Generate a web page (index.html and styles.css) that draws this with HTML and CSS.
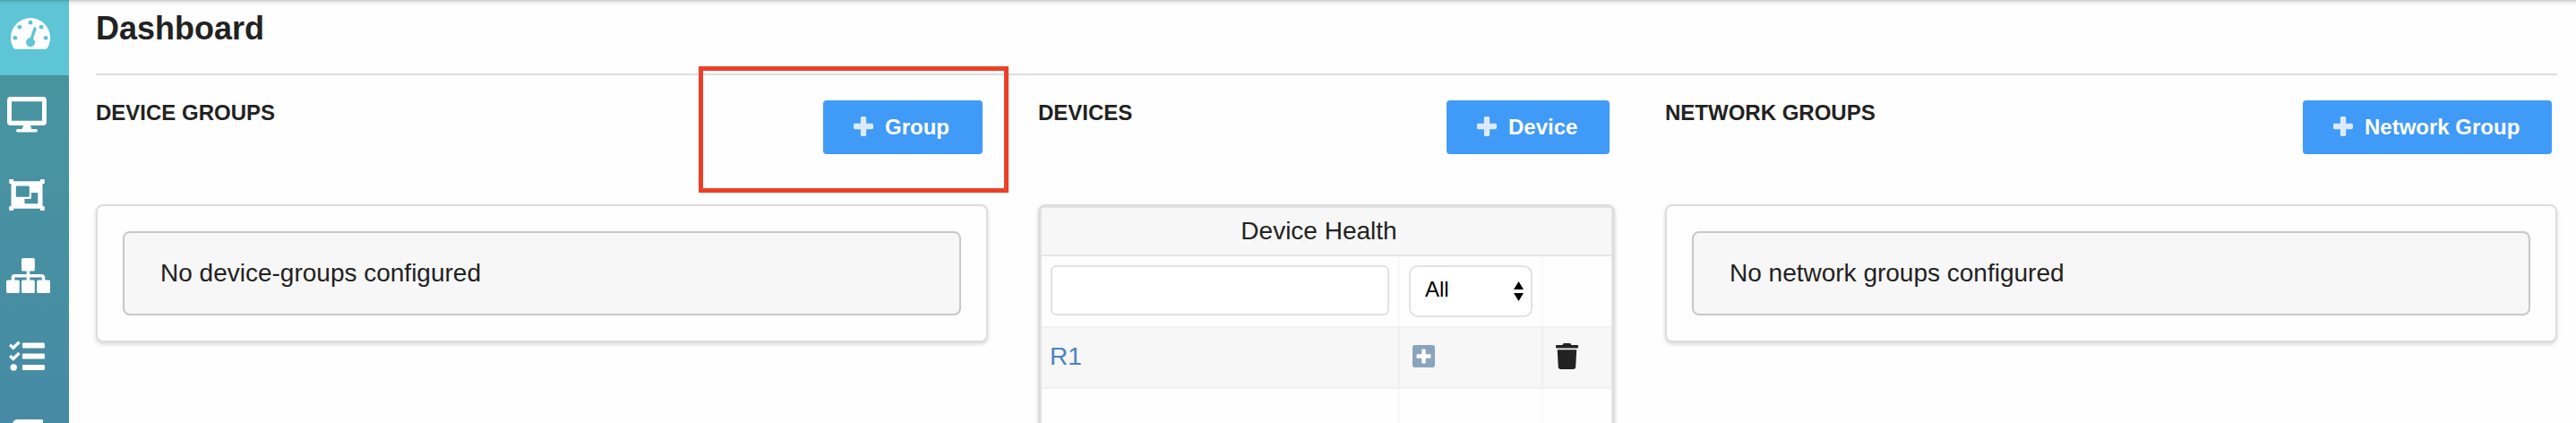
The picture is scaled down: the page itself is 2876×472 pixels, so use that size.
FILE: index.html
```html
<!DOCTYPE html>
<html lang="en">
<head>
<meta charset="utf-8">
<title>Dashboard</title>
<link rel="stylesheet" href="styles.css">
</head>
<body>
<svg class="defs" width="0" height="0">
  <symbol id="plus" viewBox="0 32 448 448"><path d="M416 192H288V64c0-17.67-14.33-32-32-32h-64c-17.67 0-32 14.33-32 32v128H32c-17.67 0-32 14.33-32 32v64c0 17.67 14.33 32 32 32h128v128c0 17.67 14.33 32 32 32h64c17.67 0 32-14.33 32-32V320h128c17.67 0 32-14.33 32-32v-64c0-17.67-14.33-32-32-32z"/></symbol>
</svg>
<div class="app">
  <nav class="sidebar">
    <a class="nav-item active">
      <svg class="ic-tach" viewBox="0 0 44 35"><path fill="#fff" d="M22 0a22 22 0 0 0-22 22c0 4 1 8 3 11.300q.900 1.500 2.500 1.500h33q1.600 0 2.500-1.500c2-3.300 3-7.300 3-11.300A22 22 0 0 0 22 0z"/><g class="hole"><circle cx="22" cy="5.200" r="2.400"/><circle cx="9.900" cy="10.200" r="2.400"/><circle cx="34.100" cy="10.200" r="2.400"/><circle cx="4.900" cy="22.300" r="2.400"/><circle cx="39.100" cy="22.300" r="2.400"/><circle cx="22" cy="27.300" r="5"/></g><path class="needle" d="M22.700 25L26.900 12.100"/></svg>
    </a>
    <a class="nav-item">
      <svg class="ic-desktop" viewBox="0 0 44 40"><path fill="#fff" fill-rule="evenodd" d="M4 0h36a4 4 0 0 1 4 4v24a4 4 0 0 1-4 4H26l1.300 4H32.200a1.800 1.800 0 0 1 0 3.600H11.800a1.800 1.800 0 0 1 0-3.600H16.700L18 32H4a4 4 0 0 1-4-4V4a4 4 0 0 1 4-4zM5 5.200v21.600h34V5.200z"/></svg>
    </a>
    <a class="nav-item">
      <svg class="ic-group" viewBox="0 0 40 35"><path fill="#fff" fill-rule="evenodd" d="M1.200 0H4.200a1 1 0 0 1 1 1v1.300H34.800V1a1 1 0 0 1 1-1h3a1 1 0 0 1 1 1v3a1 1 0 0 1-1 1h-1.300v25h1.300a1 1 0 0 1 1 1v3a1 1 0 0 1-1 1h-3a1 1 0 0 1-1-1v-1.300H5.200V34a1 1 0 0 1-1 1h-3a1 1 0 0 1-1-1v-3a1 1 0 0 1 1-1h1.300V5H1.200a1 1 0 0 1-1-1V1a1 1 0 0 1 1-1zM8.800 7.500a1 1 0 0 0-1 1v10.300a1 1 0 0 0 1 1h13a1 1 0 0 0 1-1V8.500a1 1 0 0 0-1-1zM25 15v5.500a1.500 1.500 0 0 1-1.500 1.500H17.400v4.200a1 1 0 0 0 1 1H31.300a1 1 0 0 0 1-1V16a1 1 0 0 0-1-1z"/></svg>
    </a>
    <a class="nav-item">
      <svg class="ic-sitemap" viewBox="0 0 49 39"><path fill="none" stroke="#fff" stroke-width="3.600" d="M24.500 10V28M7.500 28V21.500a1.800 1.800 0 0 1 1.800-1.800H39.700a1.800 1.800 0 0 1 1.800 1.800V28"/><g fill="#fff"><rect x="17" width="14.800" height="14.600" rx="1.500"/><rect y="24.400" width="14.800" height="14.600" rx="1.500"/><rect x="17" y="24.400" width="14.800" height="14.600" rx="1.500"/><rect x="34.200" y="24.400" width="14.800" height="14.600" rx="1.500"/></g></svg>
    </a>
    <a class="nav-item">
      <svg class="ic-tasks" viewBox="0 0 40 34"><g fill="#fff"><rect x="14.900" y="2.400" width="25" height="6" rx="1.200"/><rect x="14.900" y="14.600" width="25" height="6" rx="1.200"/><rect x="14.900" y="26.900" width="25" height="6" rx="1.200"/><circle cx="5.200" cy="29.900" r="3.700"/></g><path fill="none" stroke="#fff" stroke-width="3.300" d="M1.200 4.700L4.800 8.200L11.500 1.700M1.200 17L4.800 20.500L11.500 14"/></svg>
    </a>
    <a class="nav-item">
      <svg class="ic-book" viewBox="0 0 34 40"><path fill="#fff" d="M6 0H32.500Q34 0 34 1.500V38.500Q34 40 32.500 40H6Q0 40 0 34V6Q0 0 6 0z"/></svg>
    </a>
  </nav>
  <main class="content">
    <h1 class="title">Dashboard</h1>
    <div class="columns">
      <section class="column">
        <header class="column-head"><h2>DEVICE GROUPS</h2>
          <div class="action"><button class="btn btn-group"><svg><use href="#plus"/></svg>Group</button><span class="highlight"></span></div>
        </header>
        <div class="card"><div class="empty">No device-groups configured</div></div>
      </section>
      <section class="column devices">
        <header class="column-head"><h2>DEVICES</h2>
          <div class="action"><button class="btn btn-device"><svg><use href="#plus"/></svg>Device</button></div>
        </header>
        <div class="card table">
          <div class="table-title">Device Health</div>
          <div class="row filters">
            <div class="cell"><input class="search" type="text" aria-label="Filter"></div>
            <div class="cell"><div class="select">All<svg viewBox="0 0 11 22"><path d="M5.500 0L11 9H0zM0 13H11L5.500 22z"/></svg></div></div>
            <div class="cell"></div>
          </div>
          <div class="row data">
            <div class="cell"><a class="link">R1</a></div>
            <div class="cell"><svg class="expand" viewBox="0 0 25 25"><rect width="25" height="25" rx="2.700" fill="#8aa4bd"/><path fill="#fff" d="M11 4.500h3q.700 0 .700.700v5.100h5.100q.700 0 .700.700v3q0 .700-.700.700h-5.100v5.100q0 .700-.700.700h-3q-.700 0-.700-.700v-5.100H5.200q-.700 0-.700-.700v-3q0-.700.700-.700h5.100V5.200q0-.700.700-.700z"/></svg></div>
            <div class="cell"><svg class="trash" viewBox="0 0 25 29"><path fill="#222" d="M1 1.900H7.400L8.200.600Q8.600 0 9.300 0h6.200q.700 0 1.100.600l.800 1.300H24q1 0 1 .900V4.500q0 .900-1 .900H1q-1 0-1-.900V2.800q0-.900 1-.900zM1.700 7.200H23.200L22.200 26.300Q22 29 19.400 29H5.500Q2.900 29 2.700 26.300z"/></svg></div>
          </div>
          <div class="row blank"><div class="cell"></div><div class="cell"></div><div class="cell"></div></div>
        </div>
      </section>
      <section class="column">
        <header class="column-head"><h2>NETWORK GROUPS</h2>
          <div class="action"><button class="btn btn-network"><svg><use href="#plus"/></svg>Network Group</button></div>
        </header>
        <div class="card"><div class="empty">No network groups configured</div></div>
      </section>
    </div>
  </main>
</div>
</body>
</html>
```
FILE: styles.css
```css
* { box-sizing: border-box; }
body { margin: 0; height: 472px; overflow: hidden; background: #fefefe; color: #222; font: 28px/32px "Liberation Sans", Arial, sans-serif; }
.defs { position: absolute; }
.app { display: flex; height: 472px; overflow: hidden; background: linear-gradient(#c6c6c6, #e9e9e9 2px, #fafafa 5px, #fefefe 8px); }
.sidebar { width: 77px; flex: none; display: flex; flex-direction: column; background: linear-gradient(#48959f 84px, #468aa5 472px); }
.nav-item { height: 90px; flex: none; }
.nav-item svg { display: block; }
.nav-item.active { height: 84px; background: linear-gradient(#4a9baa, #58b8c8 2px, #5dc5d6 6px); }
.hole { fill: #5dc5d6; }
.needle { fill: none; stroke: #5dc5d6; stroke-width: 3.4; stroke-linecap: round; }
.ic-tach { width: 44px; height: 35px; margin: 20px 0 0 12px; }
.ic-desktop { width: 44px; height: 40px; margin: 23.500px 0 0 8px; }
.ic-group { width: 40px; height: 35px; margin: 26px 0 0 10px; }
.ic-sitemap { width: 49px; height: 39px; margin: 24px 0 0 7px; }
.ic-tasks { width: 40px; height: 34px; margin: 26px 0 0 10px; }
.ic-book { width: 34px; height: 40px; margin: 24px 0 0 14px; }
.content { flex: 1; padding: 0 21px 0 30px; }
.title { margin: 0; height: 84px; padding-top: 12px; border-bottom: 2px solid #ddd; font-size: 36px; line-height: 40px; }
.columns { display: grid; grid-template-columns: 996px 644px 996px; column-gap: 56px; }
.column-head { height: 144px; display: flex; justify-content: space-between; align-items: flex-start; padding: 28px 6px 0 0; }
.column-head h2 { margin: 0; font-size: 24px; line-height: 28px; }
.action { position: relative; }
.btn { display: flex; align-items: center; height: 60px; padding: 0 0 0 34px; border: 0; border-radius: 4px; background: #409af8; color: #fff; font: bold 24px/28px "Liberation Sans", Arial, sans-serif; }
.btn svg { width: 22px; height: 22px; margin: 0 13px 2px 0; fill: #dbebfd; }
.btn-group { width: 178px; }
.btn-device { width: 182px; }
.btn-network { width: 278px; }
.highlight { position: absolute; left: -139px; top: -38px; width: 346px; height: 141px; border: 5.500px solid #ec4026; }
.card { height: 154px; padding: 28px; border: 2px solid #ddd; border-radius: 8px; background: #fefefe; box-shadow: 0 2px 4px rgba(0,0,0,.16); }
.empty { height: 94px; padding: 29px 40px; border: 2px solid #c8c8c8; border-radius: 8px; background: #f7f7f7; }
.card.table { height: 300px; padding: 2px; background: #e3e3e3; overflow: hidden; }
.table-title { height: 54px; padding: 10px 17px 0 0; border-bottom: 2px solid #e6e6e6; background: #f7f7f7; text-align: center; }
.row { display: grid; grid-template-columns: 400px 160px 76px; border-bottom: 2px solid #f0f0f0; background: #fefefe; }
.cell { border-right: 2px solid #f8f8f8; }
.cell:last-child { border-right: 0; }
.filters { height: 80px; }
.filters .cell { padding: 10px; }
.data { height: 68px; background: #f7f7f7; }
.data .cell { border-color: #f0f0f0; }
.blank { height: 120px; }
.search { display: block; width: 378px; height: 56px; border: 2px solid #e2e2e2; border-radius: 6px; background: #fff; }
.select { display: flex; align-items: center; justify-content: space-between; width: 138px; height: 58px; padding: 0 8px 4px 16px; border: 2px solid #e2e2e2; border-radius: 10px; font-size: 24px; color: #000; background: #fff; }
.select svg { width: 11px; height: 22px; margin-top: 4px; }
.link { display: block; padding: 16px 0 0 9px; color: #4b83c3; }
.expand { display: block; width: 25px; height: 25px; margin: 19px 0 0 13.500px; }
.trash { display: block; width: 25px; height: 29px; margin: 17px 0 0 13.500px; }
```
